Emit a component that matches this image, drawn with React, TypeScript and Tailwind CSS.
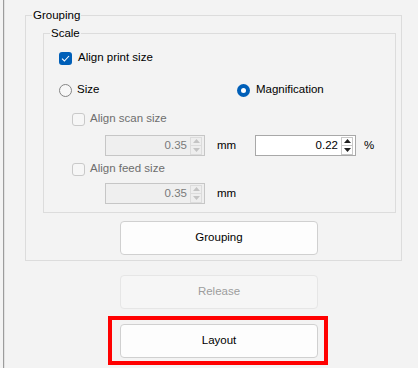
import React from 'react';

const Arrow: React.FC<{ up?: boolean; color: string }> = ({ up, color }) => (
  <svg width="7" height="4" viewBox="0 0 7 4">
    <path d={up ? 'M3.5 0 L7 4 L0 4 Z' : 'M0 0 L7 0 L3.5 4 Z'} fill={color} />
  </svg>
);

const NumberBox: React.FC<{ value: string; disabled?: boolean; width: string }> = ({ value, disabled, width }) => {
  const arrow = disabled ? '#c4c4c4' : '#1f1f1f';
  const box = disabled ? 'border-[#dcdcdc] bg-[#eeeeee]' : 'border-[#c8c8c8] bg-white';
  return (
    <div
      className={`flex h-[21px] ${width} items-center border ${
        disabled ? 'border-[#c6c6c6] bg-[#efefef] text-[#7a7a7a]' : 'border-[#a8a8a8] bg-white text-black'
      }`}
    >
      <span className="flex-1 pr-[3px] text-right leading-none">{value}</span>
      <div className="mr-[2px] flex flex-col">
        <div className={`flex h-[9px] w-[12px] items-center justify-center border ${box}`}>
          <Arrow up color={arrow} />
        </div>
        <div className={`flex h-[9px] w-[12px] items-center justify-center border border-t-0 ${box}`}>
          <Arrow color={arrow} />
        </div>
      </div>
    </div>
  );
};

const Check: React.FC<{ checked?: boolean; disabled?: boolean }> = ({ checked, disabled }) =>
  checked ? (
    <div className="flex h-[13px] w-[13px] items-center justify-center rounded-[3px] bg-[#005fb8]">
      <svg width="9" height="7" viewBox="0 0 9 7">
        <path d="M1 3.6 L3.4 6 L8 1" stroke="#ffffff" strokeWidth="1.1" fill="none" />
      </svg>
    </div>
  ) : (
    <div
      className={`h-[13px] w-[13px] rounded-[3px] border ${
        disabled ? 'border-[#c9c9c9] bg-[#f6f6f6]' : 'border-[#8a8a8a] bg-[#f7f7f7]'
      }`}
    />
  );

const Radio: React.FC<{ checked?: boolean }> = ({ checked }) =>
  checked ? (
    <div className="flex h-[13px] w-[13px] items-center justify-center rounded-full bg-[#005fb8]">
      <div className="h-[5px] w-[5px] rounded-full bg-white" />
    </div>
  ) : (
    <div className="h-[13px] w-[13px] rounded-full border border-[#858585] bg-[#f7f7f7]" />
  );

const Button: React.FC<{ label: string; disabled?: boolean }> = ({ label, disabled }) => (
  <button
    className={`flex h-[34px] w-[198px] items-center justify-center rounded-[4px] border ${
      disabled ? 'border-[#e6e6e6] bg-[#f6f6f6] text-[#9d9d9d]' : 'border-[#d0d0d0] bg-[#fdfdfd] text-black'
    }`}
  >
    {label}
  </button>
);

export default function App() {
  return (
    <div className="flex h-[368px] w-[418px] overflow-hidden bg-[#f3f3f3] font-['Liberation_Sans',Arial,sans-serif] text-[11.5px] text-black">
      <div className="w-[3px]" />
      <div className="w-px bg-[#9c9c9c]" />
      <div className="w-px bg-[#e2e2e2]" />

      <div className="flex flex-col pl-[20px] pt-[7px]">
        {/* Grouping */}
        <fieldset className="w-[377px] border border-[#dcdcdc] pb-[5px] pl-[6px] pr-[5px] pt-[2px]">
          <legend className="px-[1px] leading-[16px]">Grouping</legend>
          <div className="flex flex-col pl-[11px]">
            {/* Scale */}
            <fieldset className="w-[353px] border border-[#dcdcdc] pb-[8px] pl-[6px] pt-[7px]">
              <legend className="px-[1px] leading-[16px]">Scale</legend>
              <div className="flex flex-col pl-[9px]">
                <div className="flex h-[20px] items-center gap-[6px]">
                  <Check checked />
                  <span>Align print size</span>
                </div>

                <div className="mt-[12px] flex h-[20px] items-center">
                  <div className="flex w-[178px] items-center gap-[5px]">
                    <Radio />
                    <span>Size</span>
                  </div>
                  <div className="flex items-center gap-[6px]">
                    <Radio checked />
                    <span>Magnification</span>
                  </div>
                </div>

                <div className="ml-[13px] mt-[9px] flex h-[20px] items-center gap-[5px] text-[#6e6e6e]">
                  <Check disabled />
                  <span>Align scan size</span>
                </div>

                <div className="ml-[46px] mt-[6px] flex items-center">
                  <NumberBox value="0.35" disabled width="w-[100px]" />
                  <span className="ml-[12px] w-[38px]">mm</span>
                  <NumberBox value="0.22" width="w-[101px]" />
                  <span className="ml-[8px]">%</span>
                </div>

                <div className="ml-[13px] mt-[3px] flex h-[20px] items-center gap-[5px] text-[#6e6e6e]">
                  <Check disabled />
                  <span>Align feed size</span>
                </div>

                <div className="ml-[46px] mt-[4px] flex items-center">
                  <NumberBox value="0.35" disabled width="w-[100px]" />
                  <span className="ml-[12px]">mm</span>
                </div>
              </div>
            </fieldset>

            <div className="ml-[77px] mt-[8px]">
              <Button label="Grouping" />
            </div>
          </div>
        </fieldset>

        <div className="flex flex-col items-start pl-[95px]">
          <div className="mt-[14px]">
            <Button label="Release" disabled />
          </div>
          <div className="-ml-[12px] mt-[7px] border-4 border-[#ff0000] pb-[3px] pl-[8px] pr-[6px] pt-[4px]">
            <Button label="Layout" />
          </div>
        </div>
      </div>
    </div>
  );
}
